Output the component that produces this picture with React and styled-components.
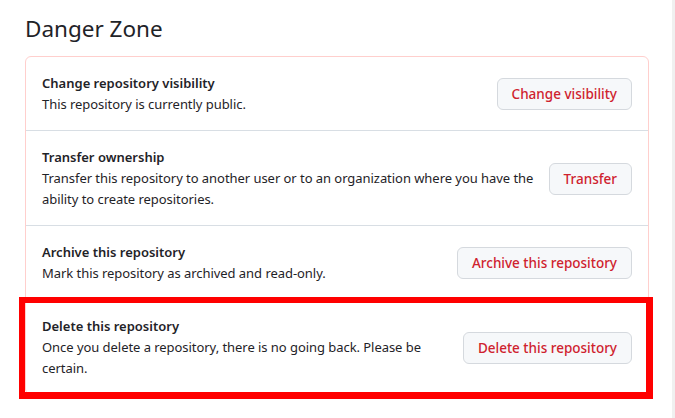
import React from 'react'
import styled, { createGlobalStyle } from 'styled-components'

const GlobalStyle = createGlobalStyle`
body {
  margin: 0;
  background: #ffffff;
  font-family: "Noto Sans", "Liberation Sans", sans-serif;
  color: #1f2328;
}
`

const rows = [
  {
    title: 'Change repository visibility',
    text: 'This repository is currently public.',
    action: 'Change visibility',
  },
  {
    title: 'Transfer ownership',
    text: 'Transfer this repository to another user or to an organization where you have the ability to create repositories.',
    action: 'Transfer',
  },
  {
    title: 'Archive this repository',
    text: 'Mark this repository as archived and read-only.',
    action: 'Archive this repository',
  },
  {
    title: 'Delete this repository',
    text: 'Once you delete a repository, there is no going back. Please be certain.',
    action: 'Delete this repository',
    marked: true,
  },
]

const App = () => {
  return (
    <Page>
      <GlobalStyle />
      <Main>
        <Heading>Danger Zone</Heading>
        <DangerBox>
          {rows.map((row) => (
            <Row key={row.title} $marked={row.marked}>
              <Info>
                <RowTitle>{row.title}</RowTitle>
                <RowText>{row.text}</RowText>
              </Info>
              <DangerButton>{row.action}</DangerButton>
            </Row>
          ))}
        </DangerBox>
      </Main>
      <Gutter />
    </Page>
  )
}

const Page = styled.div`
display: grid;
grid-template-columns: 1fr 3px;
width: 675px;
height: 418px;
overflow: hidden;
`

const Main = styled.div`
padding: 0 23px 0 25px;
`

const Gutter = styled.div`
background: #f0f0f0;
`

const Heading = styled.h2`
margin: 0;
padding: 14px 0 12px;
font-size: 22.5px;
font-weight: 400;
line-height: 30px;
color: #1f2328;
`

const DangerBox = styled.ul`
list-style: none;
margin: 0;
padding: 0;
border: 1px solid #ffcfcd;
border-radius: 6px;
`

const Row = styled.li`
position: relative;
display: flex;
align-items: center;
gap: 12px;
padding: 16px 16px 15px;
border-top: 1px solid #d8dee4;

&:first-child {
  border-top: none;
}

${({ $marked }) => $marked && `
  &::after {
    content: "";
    position: absolute;
    top: -3px;
    left: -7px;
    right: -5px;
    bottom: -5px;
    border: 6px solid #ff0000;
    border-right-width: 7px;
    border-bottom-width: 7px;
    pointer-events: none;
  }
`}
`

const Info = styled.div`
flex: 1;
min-width: 0;
`

const RowTitle = styled.div`
font-size: 13px;
font-weight: 600;
line-height: 21px;
`

const RowText = styled.p`
margin: 0;
font-size: 13px;
line-height: 21px;
letter-spacing: -0.05px;
`

const DangerButton = styled.button`
flex-shrink: 0;
height: 32px;
padding: 0 14px;
font-family: inherit;
font-size: 13.5px;
font-weight: 500;
color: #cf222e;
background: #f6f8fa;
border: 1px solid #d5d9de;
border-radius: 6px;
cursor: pointer;
`

export default App
